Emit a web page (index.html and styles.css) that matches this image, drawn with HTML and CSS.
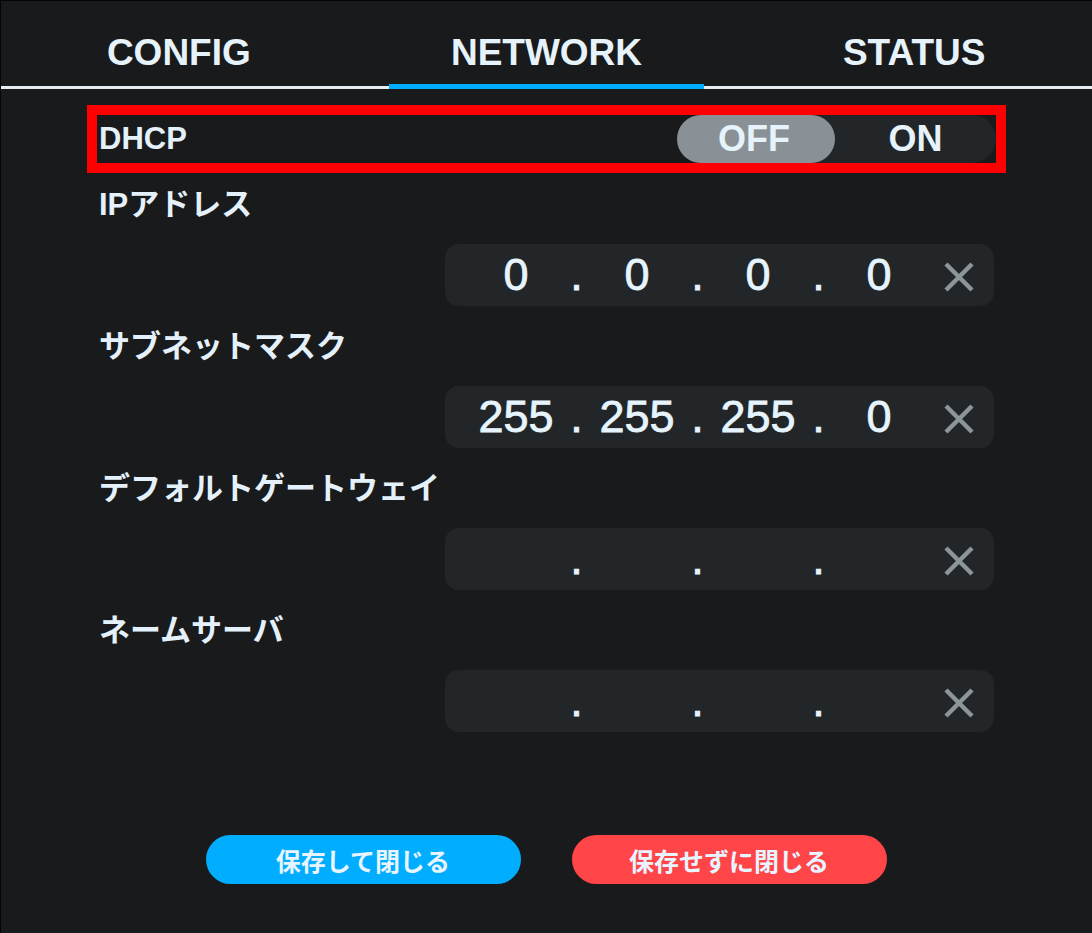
FILE: index.html
```html
<!DOCTYPE html>
<html lang="ja">
<head>
<meta charset="utf-8">
<title>NETWORK</title>
<link rel="stylesheet" href="styles.css">
</head>
<body>
<div class="screen">
  <nav class="tabs">
    <div class="tab">CONFIG</div>
    <div class="tab">NETWORK</div>
    <div class="tab">STATUS</div>
  </nav>
  <div class="tab-line">
    <span class="tab-rule"></span>
    <span class="tab-indicator"></span>
    <span class="tab-rule"></span>
  </div>

  <main class="form">
    <div class="dhcp-row">
      <span class="dhcp-label">DHCP</span>
      <div class="toggle">
        <span class="toggle-opt toggle-opt--active">OFF</span>
        <span class="toggle-opt">ON</span>
      </div>
    </div>

    <div class="fields">
      <div class="field">
        <div class="field-label">IPアドレス</div>
        <div class="ip-input">
          <span class="octet">0</span><span class="dot">.</span>
          <span class="octet">0</span><span class="dot">.</span>
          <span class="octet">0</span><span class="dot">.</span>
          <span class="octet">0</span>
          <span class="clear"><svg viewBox="0 0 30 30" width="30" height="30"><path d="M2 2 L28 28 M28 2 L2 28"/></svg></span>
        </div>
      </div>

      <div class="field">
        <div class="field-label">サブネットマスク</div>
        <div class="ip-input">
          <span class="octet">255</span><span class="dot">.</span>
          <span class="octet">255</span><span class="dot">.</span>
          <span class="octet">255</span><span class="dot">.</span>
          <span class="octet">0</span>
          <span class="clear"><svg viewBox="0 0 30 30" width="30" height="30"><path d="M2 2 L28 28 M28 2 L2 28"/></svg></span>
        </div>
      </div>

      <div class="field">
        <div class="field-label">デフォルトゲートウェイ</div>
        <div class="ip-input">
          <span class="octet"></span><span class="dot">.</span>
          <span class="octet"></span><span class="dot">.</span>
          <span class="octet"></span><span class="dot">.</span>
          <span class="octet"></span>
          <span class="clear"><svg viewBox="0 0 30 30" width="30" height="30"><path d="M2 2 L28 28 M28 2 L2 28"/></svg></span>
        </div>
      </div>

      <div class="field">
        <div class="field-label">ネームサーバ</div>
        <div class="ip-input">
          <span class="octet"></span><span class="dot">.</span>
          <span class="octet"></span><span class="dot">.</span>
          <span class="octet"></span><span class="dot">.</span>
          <span class="octet"></span>
          <span class="clear"><svg viewBox="0 0 30 30" width="30" height="30"><path d="M2 2 L28 28 M28 2 L2 28"/></svg></span>
        </div>
      </div>
    </div>
  </main>

  <footer class="actions">
    <button class="btn btn--save">保存して閉じる</button>
    <button class="btn btn--discard">保存せずに閉じる</button>
  </footer>
</div>
</body>
</html>
```

FILE: styles.css
```css
* { box-sizing: border-box; }

html, body {
  margin: 0;
  padding: 0;
  background: #191a1c;
}

body {
  font-family: "Liberation Sans", "Noto Sans CJK JP", sans-serif;
  color: #e4f1fa;
}

.screen {
  width: 1092px;
  height: 933px;
  background: #191a1c;
  border-top: 1px solid #050505;
  border-left: 1px solid #050505;
  overflow: hidden;
}

/* Tabs */
.tabs {
  display: flex;
  margin: 0 -6px;
  padding-top: 27px;
  padding-bottom: 6px;
}

.tab {
  flex: 1;
  text-align: center;
  font-size: 37px;
  font-weight: 700;
  line-height: 50px;
  color: #e6f3fb;
}

.tab-line {
  display: flex;
  align-items: flex-end;
  height: 5px;
}

.tab-rule {
  flex: 1;
  height: 3px;
  background: #e3edf3;
}

.tab-indicator {
  width: 315px;
  height: 5px;
  background: #00acfd;
}

/* Form */
.form {
  padding: 16px 86px 0 86px;
}

.dhcp-row {
  display: flex;
  align-items: center;
  justify-content: space-between;
  border: 10px solid #ff0000;
  height: 68px;
}

.dhcp-label {
  font-size: 31px;
  font-weight: 700;
  padding-left: 2px;
  color: #e4f1fa;
}

.toggle {
  display: flex;
  width: 319px;
  height: 48px;
  border-radius: 24px;
  background: #222628;
}

.toggle-opt {
  flex: 1;
  display: flex;
  align-items: center;
  justify-content: center;
  font-size: 36px;
  font-weight: 700;
  border-radius: 24px;
  color: #e6f3fb;
}

.toggle-opt--active {
  flex: 0 0 158px;
  padding-right: 4px;
  background: #899196;
}

.fields {
  padding: 11px 10px 0 10px;
}

.field + .field {
  margin-top: 20px;
}

.field-label {
  font-size: 31px;
  font-weight: 700;
  line-height: 41px;
  padding-left: 2px;
  color: #e4f1fa;
}

.ip-input {
  display: flex;
  align-items: center;
  width: 549px;
  height: 62px;
  margin: 19px 2px 0 auto;
  padding-left: 26px;
  border-radius: 14px;
  background: #222628;
  font-size: 45px;
  font-weight: 400;
  color: #e6f4fd;
}

.octet {
  width: 90px;
  text-align: center;
  line-height: 62px;
  height: 62px;
  -webkit-text-stroke: 0.8px #e6f4fd;
}

.dot {
  width: 31px;
  text-align: center;
  line-height: 62px;
  height: 62px;
  -webkit-text-stroke: 0.8px #e6f4fd;
}

.clear {
  width: 70px;
  display: flex;
  align-items: center;
  justify-content: center;
  padding-top: 3px;
}

.clear svg path {
  stroke: #8c9599;
  stroke-width: 4.5;
  fill: none;
}

/* Actions */
.actions {
  display: flex;
  justify-content: center;
  gap: 51px;
  margin-top: 103px;
  padding-right: 1px;
}

.btn {
  width: 315px;
  height: 49px;
  border: none;
  border-radius: 25px;
  font-family: "Noto Sans CJK JP", sans-serif;
  font-size: 25px;
  font-weight: 700;
  color: #e8f4ff;
  padding: 0;
}

.btn--save { background: #00adfe; }
.btn--discard { background: #ff4548; }
```
